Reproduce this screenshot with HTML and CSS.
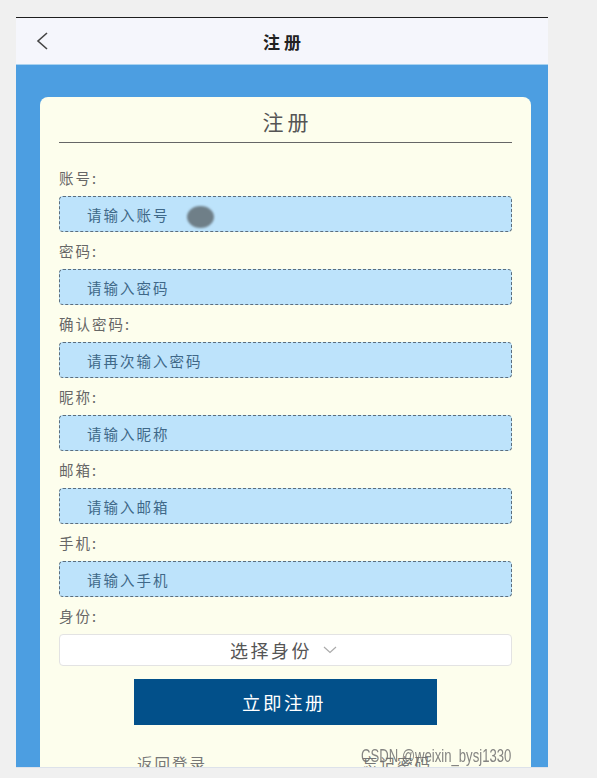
FILE: index.html
```html
<!DOCTYPE html>
<html lang="zh-CN">
<head>
<meta charset="UTF-8">
<meta name="viewport" content="width=device-width, initial-scale=1.0">
<title>注册</title>
<link rel="stylesheet" href="styles.css">
</head>
<body>

<div class="phone">
    <div class="topbar">
        <svg class="back" width="14" height="20" viewBox="0 0 14 20">
            <polyline points="12,2 3,10 12,18" fill="none" stroke="#444" stroke-width="1.6"/>
        </svg>
        <span class="topbar-title">注册</span>
    </div>

    <div class="main">
        <div class="card">
            <h2 class="card-title">注册</h2>

            <label class="label">账号:</label>
            <div class="field">
                <input type="text" class="input" placeholder="请输入账号">
                <span class="dot"></span>
            </div>

            <label class="label">密码:</label>
            <input type="password" class="input" placeholder="请输入密码">

            <label class="label">确认密码:</label>
            <input type="password" class="input" placeholder="请再次输入密码">

            <label class="label">昵称:</label>
            <input type="text" class="input" placeholder="请输入昵称">

            <label class="label">邮箱:</label>
            <input type="text" class="input" placeholder="请输入邮箱">

            <label class="label">手机:</label>
            <input type="text" class="input" placeholder="请输入手机">

            <label class="label">身份:</label>
            <div class="select">
                <span>选择身份</span>
                <svg width="14" height="8" viewBox="0 0 14 8">
                    <polyline points="1,1 7,6.5 13,1" fill="none" stroke="#aaa" stroke-width="1.2"/>
                </svg>
            </div>

            <button class="submit">立即注册</button>

            <div class="links">
                <a class="link">返回登录</a>
                <a class="link">忘记密码</a>
            </div>
        </div>
    </div>
</div>

<div class="watermark">CSDN @weixin_bysj1330</div>

</body>
</html>
```

FILE: styles.css
```css
body {
    margin: 0;
    padding: 0;
    background-color: #f0f0f0;
    font-family: "Noto Sans CJK SC", "Noto Sans", sans-serif;
    height: 778px;
    overflow: hidden;
    position: relative;
}

.phone {
    margin: 17px 0 0 16px;
    width: 532px;
    height: 751px;
    border-top: 1px solid #1e1e1e;
    border-bottom: 1px solid #dde2ea;
    overflow: hidden;
    box-sizing: border-box;
    display: flex;
    flex-direction: column;
}

.topbar {
    height: 46px;
    flex-shrink: 0;
    background-color: #f5f6fc;
    border-bottom: 1px solid #a9d2ef;
    display: flex;
    align-items: center;
    justify-content: center;
    position: relative;
}

.back {
    position: absolute;
    left: 19px;
    top: 13px;
}

.topbar-title {
    font-size: 17px;
    font-weight: bold;
    letter-spacing: 4px;
    padding-left: 4px;
    color: #222;
}

.main {
    flex: 1;
    background-color: #4c9ee1;
    padding: 32px 17px 0 24px;
}

.card {
    background-color: #fdfeed;
    border-radius: 8px;
    padding: 10px 19px 20px;
    display: flex;
    flex-direction: column;
}

.card-title {
    margin: 0 0 26px;
    font-size: 21px;
    font-weight: normal;
    letter-spacing: 4px;
    line-height: 28px;
    text-align: center;
    color: #555;
    padding: 0 0 7px 4px;
    border-bottom: 1px solid #666;
}

.label {
    font-size: 14.5px;
    letter-spacing: 2px;
    line-height: 18px;
    color: #666;
    margin-bottom: 9px;
}

.field {
    position: relative;
}

.input {
    display: block;
    width: 100%;
    height: 36px;
    margin: 0 0 10px;
    padding: 0 0 0 27px;
    background-color: #bde3fb;
    border: 1px dashed #5b6e7e;
    border-radius: 4px;
    box-sizing: border-box;
    font-family: inherit;
    font-size: 14.5px;
    letter-spacing: 2px;
    color: #3c6686;
    outline: none;
}

.input::placeholder {
    color: #3f6888;
}

.dot {
    position: absolute;
    left: 128px;
    top: 10px;
    width: 27px;
    height: 22px;
    border-radius: 50%;
    background-color: #6f7f88;
    filter: blur(1px);
}

.select {
    height: 32px;
    background-color: #fff;
    border: 1px solid #e3e3e3;
    border-radius: 4px;
    box-sizing: border-box;
    display: flex;
    align-items: center;
    justify-content: center;
    gap: 11px;
    font-size: 18px;
    letter-spacing: 2.5px;
    color: #555;
    padding-right: 4px;
}

.submit {
    align-self: center;
    width: 303px;
    height: 46px;
    margin-top: 13px;
    padding-left: 3px;
    background-color: #02508a;
    color: white;
    border: none;
    font-family: inherit;
    font-size: 18.5px;
    letter-spacing: 2.5px;
    cursor: pointer;
}

.links {
    display: flex;
    padding: 27px 0 0 78px;
    gap: 155px;
}

.link {
    font-size: 15.5px;
    letter-spacing: 2px;
    color: #777;
}

.watermark {
    position: absolute;
    left: 361px;
    top: 745px;
    font-family: "Liberation Sans", Arial, sans-serif;
    font-size: 19px;
    color: rgba(110, 110, 110, 0.85);
    white-space: nowrap;
    transform: scaleX(0.69);
    transform-origin: left top;
}
```
